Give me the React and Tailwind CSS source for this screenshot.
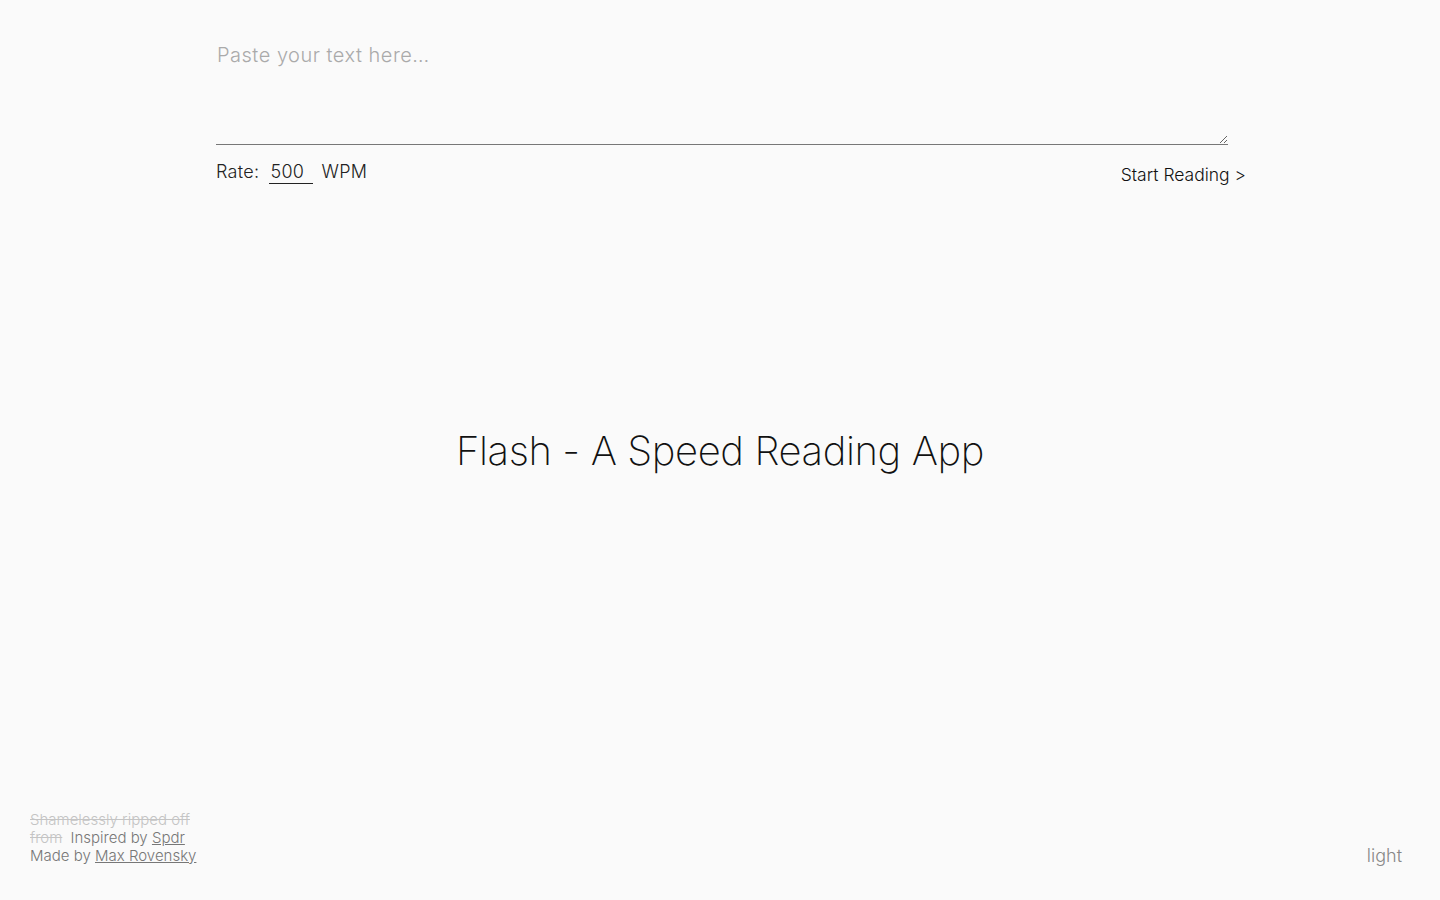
import { useState } from "react";

export default function App() {
  const [text, setText] = useState("");
  const [rate, setRate] = useState("500");

  return (
    <div
      className="relative flex h-[900px] w-full flex-col bg-[#fafafa] text-[#222]"
      style={{ fontFamily: "Inter, 'Helvetica Neue', Arial, sans-serif" }}
    >
      <div className="ml-[216px] mr-[194px] pt-[38px]">
        <textarea
          value={text}
          onChange={(e) => setText(e.target.value)}
          placeholder="Paste your text here…"
          className="block h-[107px] w-[1012px] resize-y border-b border-[#777] bg-transparent p-0 pt-[4px] pl-[1px] text-[20px] font-light leading-[26px] tracking-[0.5px] text-[#333] outline-none placeholder:text-[#aaa]"
        />
        <div className="mt-[14px] flex items-start justify-between">
          <div className="flex items-center text-[18px] font-light leading-[22px] tracking-[0.3px] text-[#222]">
            <span>Rate:</span>
            <input
              value={rate}
              onChange={(e) => setRate(e.target.value)}
              className="ml-[10px] mt-[2px] w-[44px] border-b border-[#222] bg-transparent pl-[1px] text-[18px] font-light leading-[22px] outline-none"
            />
            <span className="ml-[8px]">WPM</span>
          </div>
          <button className="mt-[5px] text-[17.5px] font-light leading-[22px] text-[#111]">
            Start Reading &gt;
          </button>
        </div>
      </div>

      <div className="flex flex-1 items-center justify-center pb-[95px]">
        <h1 className="text-[40px] font-extralight tracking-[-0.4px] text-[#111]">
          Flash - A Speed Reading App
        </h1>
      </div>

      <div className="flex items-end justify-between px-[30px] pb-[35px] pr-[38px]">
        <div className="w-[176px] text-[15px] font-light leading-[18px] text-[#777]">
          <span className="text-[#c4c4c4] line-through">Shamelessly ripped off from</span>{" "}
          <span className="ml-[4px]">
            Inspired by <a href="#" className="underline">Spdr</a>
          </span>
          <div>
            Made by <a href="#" className="underline">Max Rovensky</a>
          </div>
        </div>
        <button className="mb-[-2px] text-[18px] font-light leading-[22px] text-[#888]">light</button>
      </div>
    </div>
  );
}
